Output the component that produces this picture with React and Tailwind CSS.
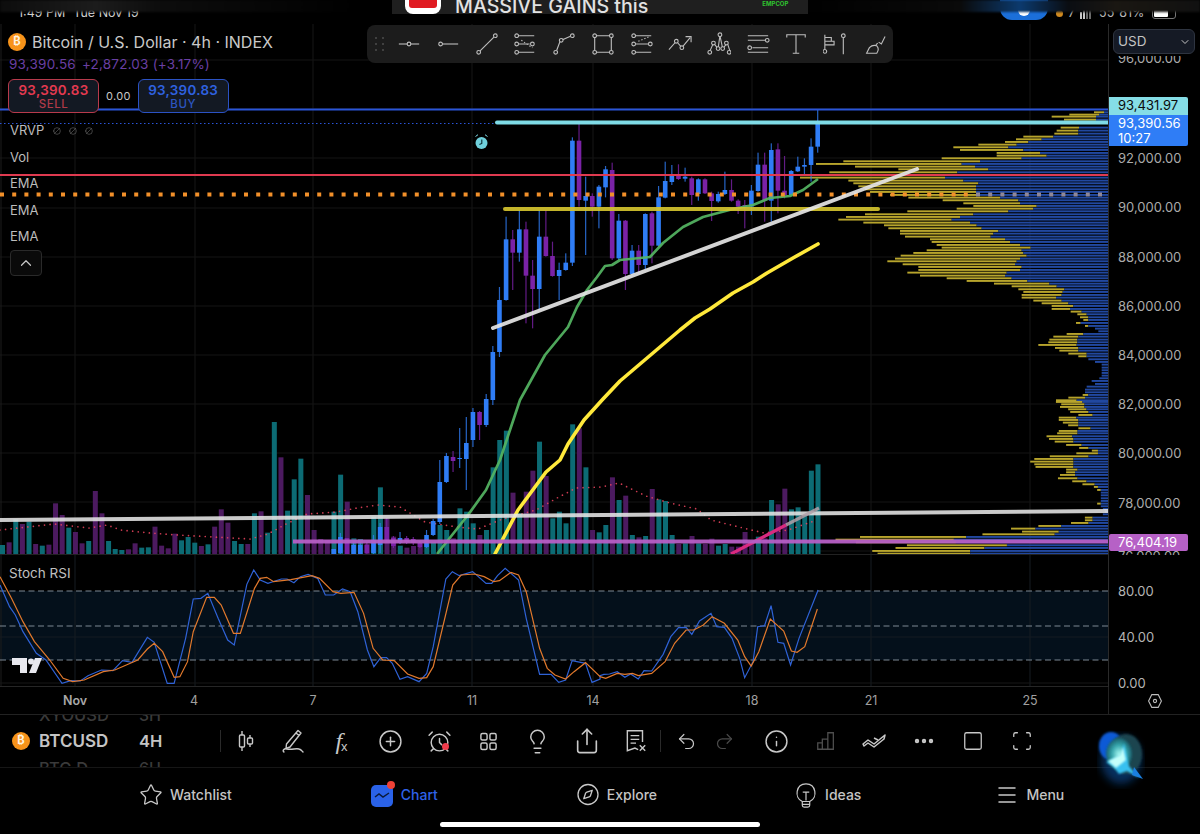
import React from 'react';
import { Star, Compass, Menu, Undo2, Redo2, Info, CirclePlus, Lightbulb, Share, Square, Scan, Ellipsis, ChevronUp, ChevronDown, AlarmClock, Ban } from 'lucide-react';

// candles left of the big move, real pixels: color, top, bottom, wick top, wick bottom
const lowCandles = [
  ['b', 549, 554, 549, 554], ['b', 537, 553, 533, 554], ['p', 538, 554, 538, 554], ['b', 545, 554, 541, 554],
  ['b', 545, 554, 542, 554], ['p', 545, 553, 542, 554], ['b', 540, 553, 535, 554], ['b', 527, 545, 523, 553],
  ['p', 527, 540, 518, 542], ['p', 538, 546, 536, 548], ['b', 538, 543, 532, 544], ['p', 538, 542, 536, 544],
  ['p', 539, 543, 537, 545], ['p', 543, 547, 541, 548], ['b', 535, 547, 530, 548], ['b', 521, 535, 519, 536],
  ['b', 482, 522, 460, 524], ['b', 456, 482, 453, 483], ['p', 457, 461, 451, 472], ['b', 458, 459, 428, 468],
  ['b', 443, 459, 417, 490], ['b', 412, 440, 408, 447], ['p', 412, 425, 411, 440], ['b', 399, 425, 394, 427],
  ['b', 352, 400, 346, 405], ['b', 300, 352, 287, 357],
];

// rest of the candles, measured on a crop: y = 110 + v / 3
const highCandles = [
  ['b', 388, 570, 320, 572], ['p', 388, 428, 360, 540], ['b', 358, 428, 300, 455], ['p', 358, 497, 335, 640],
  ['p', 497, 537, 450, 655], ['b', 380, 537, 300, 600], ['p', 380, 438, 300, 440], ['p', 438, 498, 395, 500],
  ['b', 480, 498, 458, 570], ['b', 458, 480, 430, 482], ['b', 92, 458, 82, 468], ['p', 92, 270, 42, 290],
  ['b', 258, 272, 200, 435], ['p', 258, 290, 250, 320], ['b', 230, 290, 225, 355], ['b', 178, 232, 168, 262],
  ['p', 180, 445, 158, 450], ['b', 332, 445, 312, 450], ['p', 332, 492, 330, 540], ['b', 422, 492, 405, 495],
  ['p', 422, 465, 405, 490], ['b', 312, 465, 310, 478], ['p', 310, 407, 305, 460], ['b', 262, 407, 228, 410],
  ['b', 213, 263, 155, 265], ['b', 198, 216, 165, 225], ['p', 192, 207, 163, 210], ['b', 200, 206, 173, 215],
  ['p', 205, 255, 200, 285], ['b', 208, 252, 205, 272], ['p', 208, 250, 205, 252], ['p', 250, 273, 245, 333],
  ['b', 252, 274, 245, 278], ['b', 240, 252, 185, 255], ['p', 240, 272, 208, 275], ['p', 272, 290, 268, 312],
  ['p', 285, 290, 270, 355], ['b', 242, 290, 225, 315], ['b', 164, 243, 128, 245], ['p', 164, 272, 128, 335],
  ['b', 120, 272, 100, 335], ['p', 118, 242, 100, 310], ['p', 242, 255, 138, 265], ['b', 183, 255, 180, 258],
  ['b', 170, 184, 140, 186], ['b', 165, 170, 145, 195], ['b', 110, 165, 85, 215], ['b', 40, 110, 0, 128],
].map(([c, t, b, wt, wb]) => [c, 110 + t / 3, 110 + b / 3, 110 + wt / 3, 110 + wb / 3]);

const candles = [...lowCandles, ...highCandles];

// volume bars: color letter + top, y = 400 + v / 3
const volume = 't435 p427 t358 p372 t365 p432 t437 p434 p310 p345 t383 p396 p430 t423 p273 p340 t423 t447 t450 p448 p430 t443 t442 p380 p437 p445 p401 t421 t411 t428 p438 t433 p380 p328 p368 t423 t432 p432 t340 p334 t398 t66 p172 t332 t238 t176 p285 p390 p417 p420 t335 t224 p305 t415 t417 p432 t350 t262 p355 p410 t437 p443 p438 p430 t430 t425 t375 t390 p415 t325 t335 t370 p405 t390 t202 t120 t92 p278 t340 p275 p212 t125 p228 t355 t335 t370 t73 p85 t202 p390 t397 t375 p232 t300 p287 t405 p412 t408 p267 t298 t303 t405 p432 t430 p408 t430 p432 p416 t437 t432 p440 p440 p396 p425 t410 p415 t300 p313 p266 t328 t322 t345 t212 t193'
  .split(' ')
  .map((s) => [s[0], +s.slice(1)]);

// volume profile, upper crop: row v, yellow start, blue start (x = 820 + n / 3, y = 100 + v / 3)
const profileTop = [
  [34, 822, 852], [41, 748, 838], [47, 695, 828], [56, 732, 828], [80, 722, 777], [89, 710, 775], [98, 703, 775], [107, 610, 700],
  [115, 588, 665], [123, 555, 625], [131, 475, 590], [139, 400, 565], [147, 420, 610], [156, 530, 660], [164, 530, 680], [172, 365, 605],
  [181, 70, 480], [189, -12, 425], [197, 105, 465], [205, 235, 505], [214, 28, 412], [222, -20, 375], [230, -60, 375], [239, 85, 430],
  [247, 100, 475], [256, 115, 468], [265, 135, 468], [273, 150, 468], [282, 210, 468], [290, 265, 540], [298, 368, 595], [307, 430, 600],
  [315, 460, 650], [323, 410, 640], [331, 262, 565], [340, 135, 460], [348, 78, 420], [356, 55, 395], [365, 130, 450], [373, 192, 470],
  [382, 205, 485], [390, 240, 535], [398, 240, 520], [407, 255, 512], [415, 330, 555], [423, 335, 570], [432, 350, 600], [440, 365, 632],
  [448, 320, 605], [456, 280, 610], [464, 242, 620], [473, 225, 600], [481, 202, 590], [490, 248, 585], [498, 295, 605], [507, 295, 600],
  [515, 262, 560], [524, 300, 555], [532, 380, 575], [540, 440, 622], [548, 522, 688], [556, 575, 710], [565, 595, 733], [573, 610, 728],
  [582, 605, 725], [590, 605, 708], [599, 640, 725], [607, 665, 745], [615, 695, 760], [624, 695, 750], [632, 752, 785], [640, 772, 800],
  [649, 780, 805], [657, 790, 805], [666, 768, 782], [675, 795, 805], [683, 825, 825], [691, 835, 835], [699, 740, 790], [707, 700, 775],
  [716, 688, 772], [724, 685, 772], [732, 655, 770], [741, 705, 775], [749, 718, 775], [758, 745, 800], [766, 775, 800], [775, 805, 805],
  [783, 825, 825], [791, 845, 845], [800, 845, 845], [808, 845, 845], [816, 845, 845], [824, 845, 845], [832, 838, 838], [840, 815, 815],
  [849, 825, 825], [857, 800, 800], [866, 795, 795], [874, 795, 795], [882, 788, 805], [890, 745, 795], [898, 708, 770],
].map(([v, a, b]) => [100 + v / 3, 820 + a / 3, 820 + b / 3]);

// lower crop: x = 560 + n / 2.45, y = 400 + v / 3
const profileLow = [
  [3, 1215, 1280], [10, 1228, 1285], [18, 1225, 1285], [25, 1245, 1290], [33, 1250, 1295], [42, 1270, 1305], [50, 1222, 1265], [57, 1222, 1270],
  [65, 1232, 1270], [73, 1245, 1270], [82, 1270, 1300], [90, 1222, 1268], [97, 1218, 1268], [106, 1192, 1255], [114, 1198, 1258], [122, 1212, 1258],
  [132, 1240, 1278], [141, 1272, 1295], [149, 1303, 1318], [157, 1265, 1318], [166, 1200, 1295], [174, 1162, 1258], [182, 1152, 1258], [190, 1162, 1258],
  [198, 1165, 1258], [206, 1240, 1268], [214, 1240, 1262], [222, 1225, 1262], [232, 1220, 1268], [241, 1255, 1290], [250, 1280, 1310], [258, 1308, 1318],
  [267, 1316, 1325], [275, 1325, 1325], [283, 1325, 1325], [292, 1325, 1325], [300, 1325, 1325], [308, 1316, 1325], [316, 1325, 1325], [324, 1330, 1330],
  [332, 1335, 1335], [340, 1330, 1330], [350, 1286, 1305], [358, 1286, 1305], [366, 1252, 1295], [375, 1172, 1228], [383, 1105, 1165], [392, 1132, 1222],
  [400, 1035, 1212], [408, 735, 995], [416, 675, 965], [424, 725, 970], [433, 850, 1095], [441, 822, 1040], [450, 765, 1005], [458, 778, 1005],
].map(([v, a, b]) => [400 + v / 3, 560 + a / 2.45, 560 + b / 2.45]);

const profile = [...profileTop, ...profileLow];

const pts = (list) => list.map(([x, y]) => `${x},${y}`).join(' ');

const greenEma = [[437, 554], [468, 515], [486, 490], [500, 460], [520, 400], [545, 355], [568, 327], [577, 307], [587, 290], [597, 277], [605, 266], [612, 265], [620, 260], [650, 257], [663, 243], [683, 227], [703, 217], [733, 209], [753, 205], [770, 198], [790, 196], [803, 190], [818, 179]];
const yellowEma = [[495, 554], [518, 510], [546, 472], [560, 460], [568, 444], [584, 420], [603, 399], [620, 381], [640, 364], [660, 347], [680, 330], [695, 318], [710, 309], [733, 293], [753, 282], [767, 273], [793, 258], [818, 244]];
const volumeMa = [[0, 530], [18, 528], [54, 524], [89, 528], [107, 525], [121, 530], [150, 533], [178, 535], [214, 537], [250, 539], [268, 534], [286, 524], [307, 514], [336, 512], [357, 508], [378, 505], [400, 507], [425, 522], [457, 527], [478, 529], [500, 520], [536, 510], [557, 498], [576, 488], [601, 487], [619, 483], [646, 496], [670, 503], [697, 509], [711, 520], [735, 526], [764, 533], [788, 530], [817, 520]];

const toStoch = (list, offset) => list.map(([x, y]) => [offset + x / 2.613, 555 + y / 3]);
const stochBlue = [
  ...toStoch([[0, 90], [25, 155], [40, 180], [60, 230], [95, 295], [120, 315], [162, 385], [185, 377], [210, 378], [230, 362], [265, 345], [295, 347], [320, 317], [345, 322], [385, 247], [403, 262], [437, 385], [455, 385], [485, 250], [505, 132], [525, 130], [543, 115], [570, 190], [595, 255], [612, 270], [645, 88], [663, 45], [680, 75], [700, 85], [735, 72], [750, 72], [768, 83], [785, 65], [805, 58], [830, 70], [850, 120], [872, 120], [895, 102], [915, 110], [935, 170], [960, 285], [977, 335], [995, 308], [1010, 308], [1025, 325], [1045, 373], [1065, 365], [1095, 380], [1115, 355], [1132, 275], [1165, 72], [1182, 50], [1200, 62], [1235, 50], [1270, 85], [1285, 85], [1300, 62], [1320, 40], [1355, 75], [1375, 190], [1410, 358], [1440, 358], [1460, 382], [1478, 375], [1495, 317], [1530, 325], [1547, 382], [1568, 372]], 0),
  ...toStoch([[0, 362], [10, 358], [25, 357], [45, 350], [65, 367], [80, 357], [100, 372], [115, 347], [135, 348], [165, 298], [185, 245], [205, 218], [225, 217], [240, 238], [260, 198], [290, 175], [305, 215], [325, 217], [345, 250], [365, 310], [378, 368], [400, 320], [412, 215], [430, 212], [447, 152], [465, 262], [480, 265], [498, 330], [520, 250], [570, 105]], 600),
];
const stochOrange = [
  ...toStoch([[0, 65], [30, 130], [60, 200], [90, 260], [130, 315], [165, 370], [190, 380], [220, 375], [270, 350], [300, 345], [330, 330], [360, 315], [385, 282], [403, 265], [425, 290], [455, 367], [470, 365], [490, 320], [505, 230], [540, 127], [560, 127], [578, 150], [610, 235], [628, 235], [665, 100], [680, 70], [697, 67], [715, 80], [760, 74], [815, 62], [835, 70], [870, 110], [890, 115], [925, 112], [950, 175], [975, 280], [1000, 315], [1030, 317], [1065, 357], [1095, 370], [1115, 368], [1132, 335], [1183, 90], [1205, 60], [1240, 57], [1265, 65], [1290, 80], [1305, 77], [1335, 52], [1355, 60], [1375, 110], [1410, 280], [1430, 340], [1450, 360], [1478, 372], [1500, 350], [1530, 323], [1568, 365]], 0),
  ...toStoch([[0, 365], [15, 370], [45, 355], [65, 358], [85, 355], [100, 362], [135, 355], [170, 320], [195, 265], [225, 225], [245, 225], [270, 210], [293, 185], [325, 205], [360, 255], [378, 305], [395, 333], [415, 290], [445, 192], [480, 228], [500, 288], [515, 292], [535, 275], [568, 162]], 600),
];

const gridX = [75, 195, 313, 472, 593, 752, 871, 1030];
const gridY = [60, 109, 158, 208, 257, 306, 355, 404, 453, 502, 551];
const axisPrices = [[157, '92,000.00'], [206, '90,000.00'], [256, '88,000.00'], [305, '86,000.00'], [354, '84,000.00'], [403, '82,000.00'], [452, '80,000.00'], [502, '78,000.00']];
const timeTicks = [[75, 'Nov', true], [194, '4'], [313, '7'], [472, '11'], [593, '14'], [752, '18'], [871, '21'], [1030, '25']];

function MainChart() {
  const orangeDots = [];
  for (let x = 2; x < 1108; x += 12.2) orangeDots.push(x);
  return (
    <svg viewBox="0 24 1108 531" className="block w-[1108px] h-[531px]">
      {gridX.map((x) => <line key={x} x1={x} x2={x} y1="24" y2="555" stroke="#161616" />)}
      {gridY.map((y) => <line key={y} x1="0" x2="1108" y1={y} y2={y} stroke="#141414" />)}
      <line x1="1" x2="1" y1="24" y2="555" stroke="#1c1c1c" />

      {volume.map(([c, v], i) => {
        const top = 400 + v / 3;
        return <rect key={i} x={6.63 * i} y={top} width="5" height={554 - top} fill={c === 't' ? '#0c6b74' : '#4c1a60'} />;
      })}
      <polyline points={pts(volumeMa)} fill="none" stroke="#f0455f" strokeWidth="1.7" strokeDasharray="0 5.6" strokeLinecap="round" opacity="0.85" />

      {profile.map(([y, a, b], i) => (
        <g key={i}>
          {a < b && <rect x={a} y={y} width={b - a} height="1.9" fill="#b7a42c" />}
          <rect x={b} y={y} width={1108 - b} height="1.9" fill="#2148a0" />
        </g>
      ))}

      {candles.map(([c, t, b, wt, wb], i) => {
        const x = 817.7 - 6.63 * (candles.length - 1 - i);
        const fill = c === 'b' ? '#2f7df6' : '#7a22a6';
        return (
          <g key={i}>
            <rect x={x - 0.6} y={wt} width="1.2" height={wb - wt} fill={fill} opacity="0.8" />
            <rect x={x - 2.3} y={t} width="4.6" height={Math.max(b - t, 1)} fill={fill} />
          </g>
        );
      })}

      <polyline points={pts(greenEma)} fill="none" stroke="#55b563" strokeWidth="2.7" strokeLinejoin="round" opacity="0.92" />
      <polyline points={pts(yellowEma)} fill="none" stroke="#ffe93b" strokeWidth="3.6" strokeLinejoin="round" strokeLinecap="round" />

      <line x1="0" x2="1108" y1="109.5" y2="109.5" stroke="#2a55d8" strokeWidth="2" />
      <line x1="0" x2="497" y1="123.5" y2="123.5" stroke="#2a55d8" strokeWidth="1" strokeDasharray="1.5 2.5" />
      <line x1="497" x2="1108" y1="122.5" y2="122.5" stroke="#7fdbe6" strokeWidth="4" strokeLinecap="round" />
      <line x1="0" x2="1108" y1="175" y2="175" stroke="#df3a50" strokeWidth="2" />
      {orangeDots.map((x) => <rect key={x} x={x - 2} y="192.5" width="4" height="4" fill={x > 975 ? '#8f8798' : '#f2902a'} />)}
      <line x1="505" x2="878" y1="209" y2="209" stroke="#d4c42e" strokeWidth="4" strokeLinecap="round" opacity="0.92" />
      <line x1="493" x2="917" y1="328" y2="169" stroke="#e6e6e6" strokeWidth="4" strokeLinecap="round" opacity="0.92" />
      <line x1="0" x2="1108" y1="520" y2="511" stroke="#e6e6e6" strokeWidth="4" opacity="0.88" />
      <line x1="731" x2="786" y1="554" y2="525" stroke="#d92a80" strokeWidth="3.2" />
      <line x1="786" x2="819" y1="525" y2="508" stroke="#b3a0a8" strokeWidth="3.2" opacity="0.85" />
      <line x1="293" x2="1108" y1="541.5" y2="541.5" stroke="#b75fc6" strokeWidth="4" opacity="0.95" />

      <g stroke="#7fd8e3" strokeWidth="1" fill="none">
        <path d="M475.5 136.5l2.5-1.8M487.5 136.5l-2.5-1.8" />
      </g>
      <circle cx="481.5" cy="143" r="6" fill="#6fd0dc" />
      <path d="M481.8 139.5v4l-2.4 1" stroke="#0a2a30" strokeWidth="1.1" fill="none" />
      <line x1="0" x2="1108" y1="554.5" y2="554.5" stroke="#222" />
    </svg>
  );
}

function StochChart() {
  return (
    <svg viewBox="0 555 1108 132" className="block w-[1108px] h-[132px]">
      <rect x="0" y="591" width="1108" height="69" fill="#04101b" />
      {gridX.map((x) => <line key={x} x1={x} x2={x} y1="555" y2="687" stroke="#161c22" />)}
      <line x1="1" x2="1" y1="555" y2="687" stroke="#1c1c1c" />
      <line x1="0" x2="1108" y1="637" y2="637" stroke="#141b22" />
      <line x1="0" x2="1108" y1="683" y2="683" stroke="#161616" />
      {[591, 626, 660].map((y) => <line key={y} x1="0" x2="1108" y1={y} y2={y} stroke="#7c8894" strokeDasharray="6 3.5" />)}
      <polyline points={pts(stochBlue)} fill="none" stroke="#2f62d6" strokeWidth="1.2" />
      <polyline points={pts(stochOrange)} fill="none" stroke="#e2792c" strokeWidth="1.2" />
      <g fill="#e8e8ee">
        <path d="M12 658h15v15h-7v-8h-8z" />
        <circle cx="31" cy="661.5" r="3" />
        <path d="M35 658h7l-6 15h-7z" />
      </g>
      <line x1="0" x2="1108" y1="686.5" y2="686.5" stroke="#262626" />
    </svg>
  );
}

function Node({ x, y }) {
  return <circle cx={x} cy={y} r="2" fill="#1c1c1c" />;
}

// drawing toolbar glyphs, 26 x 26
const toolIcons = [
  <><path d="M2 13h22" /><Node x={13} y={13} /></>,
  <><path d="M7 13h17" /><Node x={5} y={13} /></>,
  <><path d="M5.5 20.5 20.5 5.5" /><Node x={4} y={22} /><Node x={22} y={4} /></>,
  <><path d="M6 4h17M6 13h12M6 22h17" /><path d="M9 9l12 8" strokeDasharray="1.5 2" /><Node x={4} y={4} /><Node x={4} y={13} /><Node x={21} y={13} /><Node x={4} y={22} /></>,
  <><path d="M5 20 9 9.5 20 4.5" /><Node x={4} y={22} /><Node x={10} y={9} /><Node x={22} y={4} /></>,
  <><path d="M6 4h14M6 22h14M4 6v14M22 6v14" /><Node x={4} y={4} /><Node x={22} y={4} /><Node x={4} y={22} /><Node x={22} y={22} /></>,
  <><path d="M6 4h17M6 13h15M6 22h17" /><path d="M9 10l12-5" strokeDasharray="1.5 2" /><Node x={4} y={4} /><Node x={4} y={13} /><Node x={22} y={13} /><Node x={4} y={22} /></>,
  <><path d="M1 19 9 10l6 7 9-11" /><path d="M19 5h6v6" /><Node x={9} y={10} /><Node x={15} y={17} /></>,
  <><path d="M3 21 7 12l5 6 2-14 3 14 5-6 3 9" /><Node x={3} y={22} /><Node x={7} y={12} /><Node x={14} y={3} /><Node x={12} y={18} /><Node x={17} y={18} /><Node x={21} y={12} /><Node x={24} y={22} /></>,
  <><path d="M2 4h22M2 22h22M2 9h19M7 17h17" /><Node x={23} y={9} /><Node x={4} y={17} /></>,
  <path d="M3 6V3h20v3M13 3v20M9.5 23h7" />,
  <><path d="M2 19V3M2 6h7v4H2M2 10h10v4H2" /><Node x={2} y={21} /><path d="M22 6v18" /><Node x={22} y={4} /></>,
  <><path d="M5 23h11c2-3 2-6 0-8-3-1-6 0-8 2zM15 14l2-2" /><path d="M18 11l3 2 4-8" /></>,
];

function DrawingToolbar() {
  return (
    <div className="absolute left-[367px] top-[1px] flex h-[38px] w-[526px] items-center rounded-lg bg-[#1c1c1c]">
      <div className="ml-[8px] grid w-[12px] grid-cols-2 gap-x-[4px] gap-y-[4px]">
        {[0, 1, 2, 3, 4, 5].map((i) => <span key={i} className="h-[2px] w-[2px] rounded-full bg-[#4d4d4d]" />)}
      </div>
      <div className="ml-[5px] flex items-center">
        {toolIcons.map((icon, i) => (
          <div key={i} className="flex h-[38px] w-[38.7px] items-center justify-center">
            <svg viewBox="0 0 26 26" className="h-[24px] w-[24px]" fill="none" stroke="#bdbdbd" strokeWidth="1.2">{icon}</svg>
          </div>
        ))}
      </div>
    </div>
  );
}

function Coin({ size }) {
  return (
    <span style={{ width: size, height: size, fontSize: size * 0.62 }} className="flex shrink-0 items-center justify-center rounded-full bg-[#f7931a] font-bold leading-none text-[#fff3e0]">₿</span>
  );
}

function TradeBox({ label, border, text, sub }) {
  return (
    <div className={`flex h-[34px] w-[91px] flex-col items-center justify-center rounded-md border bg-[#131923] ${border}`}>
      <span className={`text-[13.4px] font-semibold leading-[16px] tracking-[0.3px] ${text}`}>93,390.83</span>
      <span className={`text-[11.5px] font-medium leading-[13px] tracking-[0.5px] ${sub}`}>{label}</span>
    </div>
  );
}

function Legend() {
  return (
    <div className="absolute left-[8px] top-[7px] flex flex-col items-start">
      <div className="flex h-[22px] items-center gap-[6px]">
        <Coin size={18} />
        <span className="text-[16px] leading-none text-[#c9c9c9]">Bitcoin / U.S. Dollar · 4h · INDEX</span>
      </div>
      <div className="flex h-[22px] items-center gap-[6px] pl-[1px] text-[13.5px] tracking-[0.2px] text-[#6a3fa3]">
        <span>93,390.56</span>
        <span>+2,872.03 (+3.17%)</span>
      </div>
      <div className="mt-[4px] flex items-center gap-[7px]">
        <TradeBox label="SELL" border="border-[#b83a4c]" text="text-[#e53a50]" sub="text-[#b03a48]" />
        <span className="text-[11px] tracking-[0.3px] text-[#c8c8c8]">0.00</span>
        <TradeBox label="BUY" border="border-[#2b52c4]" text="text-[#2f62e0]" sub="text-[#2c55c0]" />
      </div>
      <div className="mt-[8px] flex h-[20px] items-center gap-[9px] pl-[2px] text-[13px] text-[#bcbcbc]">
        <span>VRVP</span>
        <span className="flex gap-[8px] text-[#7d7d7d]">
          <Ban size={8} strokeWidth={1.5} className="-scale-x-100" /><Ban size={8} strokeWidth={1.5} className="-scale-x-100" /><Ban size={8} strokeWidth={1.5} className="-scale-x-100" />
        </span>
      </div>
      <div className="flex flex-col pl-[2px] text-[13px] leading-[26.3px] text-[#bcbcbc]">
        <span className="mt-[3px]">Vol</span>
        <span>EMA</span>
        <span>EMA</span>
        <span>EMA</span>
      </div>
      <div className="ml-[2px] mt-[1px] flex h-[26px] w-[32px] items-center justify-center rounded-[4px] border border-[#2a2a2a] bg-[#0a0a0a]">
        <ChevronUp size={18} strokeWidth={1.6} className="text-[#c8c8c8]" />
      </div>
    </div>
  );
}

function AxisLabel({ y, children, className = 'text-[#ababab]' }) {
  return <div style={{ top: y + 0.5 }} className={`absolute left-[9px] -translate-y-1/2 text-[13px] leading-none ${className}`}>{children}</div>;
}

function PriceAxis() {
  return (
    <div className="relative h-[531px] w-[92px] overflow-hidden border-l border-[#2a2a2a]">
      <AxisLabel y={33}>96,000.00</AxisLabel>
      {axisPrices.map(([y, label]) => <AxisLabel key={y} y={y - 24}>{label}</AxisLabel>)}
      <AxisLabel y={531}>76,000.00</AxisLabel>
      <div className="absolute left-0 top-0 h-[31.5px] w-full bg-black">
        <div className="absolute left-[4px] top-[5px] flex h-[25px] w-[82px] items-center justify-between rounded-md border border-[#2e3440] bg-[#151a25] pl-[4px] pr-[3px] text-[13.5px] text-[#c4c4c4]">
          USD
          <ChevronDown size={12} strokeWidth={2} />
        </div>
      </div>
      <div className="absolute left-0 top-[73px] flex h-[18px] w-[79px] items-center rounded-tr-[2px] bg-[#85dde6] pl-[9px] text-[13px] text-[#0b0b0b]">93,431.97</div>
      <div className="absolute left-0 top-[91px] flex h-[31px] w-[79px] flex-col justify-center rounded-br-[2px] bg-[#2f7df6] pl-[9px] text-[13px] leading-[15px] text-white">
        <span>93,390.56</span>
        <span>10:27</span>
      </div>
      <div className="absolute left-0 top-[510px] flex h-[17px] w-[79px] items-center rounded-[2px] bg-[#b661c6] pl-[9px] text-[13px] text-white">76,404.19</div>
    </div>
  );
}

function StatusBar() {
  return (
    <div className="relative h-[24px] overflow-hidden">
      <div className="absolute left-[18px] top-[7px] flex gap-[8px] text-[12.5px] leading-none text-[#d0d0d0]">
        <span>1:49 PM</span>
        <span>Tue Nov 19</span>
      </div>
      <div className="absolute left-[1000px] top-[-13px] flex h-[33px] w-[48px] items-end justify-center rounded-[12px] bg-[#1b6fd9] pb-[4px]">
        <span className="h-[12px] w-[12px] rounded-full bg-white" />
      </div>
      <div className="absolute left-[1056px] top-[7px] flex items-center gap-[5px] text-[12.5px] leading-none text-[#b8b8b8]">
        <span className="h-[7px] w-[7px] rounded-full bg-[#d08a20]" />
        <span>7</span>
        <span className="flex items-end gap-[1px]">
          <span className="h-[7px] w-[2px] bg-[#c8c8c8]" /><span className="h-[9px] w-[2px] bg-[#c8c8c8]" /><span className="h-[11px] w-[2px] bg-[#6a6a6a]" /><span className="h-[12px] w-[2px] bg-[#6a6a6a]" />
        </span>
        <span className="ml-[3px]">55</span>
        <span>81%</span>
        <span className="ml-[3px] flex h-[11px] w-[24px] items-start rounded-[3px] border border-[#777] p-[1px]"><span className="h-full w-[14px] rounded-[1px] bg-white" /></span>
      </div>
      <div className="absolute inset-x-0 top-0 h-[12px] bg-[linear-gradient(90deg,#0d0d0d_0%,#1c1c1c_8%,#0d0d0d_13%,#000_30%,#000_66%,#0a0a0a_80%,#0c3a6e_85%,#0a0d12_89%,#1a1712_93%,#111_100%)] blur-[1px]" />
      <div className="absolute left-[392px] top-0 flex h-[14px] w-[416px] items-end overflow-hidden bg-[#1f1f1f]">
        <div className="relative ml-[13px] h-[14px] w-[36px] overflow-hidden rounded-b-[8px] bg-white">
          <div className="absolute left-[4px] top-[-8px] h-[16px] w-[28px] rounded-[3px] bg-[#e01b22]" />
        </div>
        <span className="ml-[14px] translate-y-[3px] text-[19.6px] font-medium leading-none text-[#e2e2e2]">MASSIVE GAINS this</span>
        <span className="ml-[114px] self-start text-[6px] font-bold leading-[7px] text-[#2fc42f]">EMPCOP</span>
      </div>
    </div>
  );
}

function Sep() {
  return <span className="h-[22px] w-px shrink-0 bg-[#2a2a2a]" />;
}

function Tool({ children }) {
  return <div className="relative flex h-[52px] w-[49px] shrink-0 items-center justify-center text-[#c8c8c8]">{children}</div>;
}

function BottomToolbar() {
  return (
    <div className="flex h-[53px] items-center border-b border-[#161616]">
      <div className="relative flex h-[52px] w-[220px] shrink-0 items-center overflow-hidden pl-[12px]">
        <Coin size={18} />
        <span className="absolute left-[39px] top-[-12px] text-[16.5px] font-medium text-[#3a3a3a]">XYOUSD</span>
        <span className="absolute left-[139px] top-[-12px] text-[16px] font-medium text-[#3a3a3a]">3H</span>
        <span className="absolute left-[39px] top-[41px] text-[16.5px] font-medium text-[#3a3a3a]">BTC.D</span>
        <span className="absolute left-[139px] top-[41px] text-[16px] font-medium text-[#3a3a3a]">6H</span>
        <span className="absolute left-[39px] top-[16px] text-[17px] font-semibold leading-[20px] text-[#c4c4c4]">BTCUSD</span>
        <span className="absolute left-[139px] top-[16px] text-[16.5px] font-semibold leading-[20px] text-[#c4c4c4]">4H</span>
      </div>
      <Sep />
      <Tool>
        <svg viewBox="0 0 24 24" className="h-[24px] w-[24px]" fill="none" stroke="#c8c8c8" strokeWidth="1.4">
          <path d="M8 2v4M8 18v4M16 6v3M16 15v3" /><rect x="5.5" y="6" width="5" height="12" rx="1" /><rect x="13.5" y="9" width="5" height="6" rx="1" />
        </svg>
      </Tool>
      <div className="-ml-[2px]"><Sep /></div>
      <Tool>
        <svg viewBox="0 0 26 26" className="h-[26px] w-[26px]" fill="none" stroke="#c8c8c8" strokeWidth="1.4" strokeLinecap="round" strokeLinejoin="round">
          <path d="M18 2.5l3 2.5L10 19l-4 1.5.5-4.5zM16 5l3 2.5" /><path d="M4 24c-2-1 0-4 3-3 5 1 9-1 12 0 2 .5 3 2 4 3" />
        </svg>
      </Tool>
      <Tool>
        <span className="flex items-end font-['Liberation_Serif',serif] text-[24px] italic leading-none">f<span className="-ml-[1px] font-['Liberation_Sans',sans-serif] text-[13px] not-italic">x</span></span>
      </Tool>
      <Tool><CirclePlus size={25} strokeWidth={1.4} /></Tool>
      <Tool>
        <AlarmClock size={25} strokeWidth={1.4} />
        <span className="absolute left-[27px] top-[28px] h-[7px] w-[7px] rounded-full bg-[#ef3b4b]" />
      </Tool>
      <Tool>
        <svg viewBox="0 0 20 20" className="h-[19px] w-[19px]" fill="none" stroke="#c8c8c8" strokeWidth="1.5">
          <rect x="2" y="1.5" width="6.5" height="7" rx="1.6" /><rect x="11.5" y="1.5" width="6.5" height="7" rx="1.6" /><rect x="2" y="11.5" width="6.5" height="7" rx="1.6" /><rect x="11.5" y="11.5" width="6.5" height="7" rx="1.6" />
        </svg>
      </Tool>
      <Tool><Lightbulb size={27} strokeWidth={1.3} /></Tool>
      <Tool><Share size={28} strokeWidth={1.4} /></Tool>
      <Tool>
        <svg viewBox="0 0 24 24" className="h-[26px] w-[26px]" fill="none" stroke="#c8c8c8" strokeWidth="1.3">
          <path d="M14 20l-3-1.5L4 21V2.5h14V13M7 7h8M7 10.5h8M7 14h5" /><path d="M15.5 16l5 5M20.5 16l-5 5" />
        </svg>
      </Tool>
      <Sep />
      <div className="ml-[6px] flex">
        <div className="flex h-[52px] w-[38px] items-center justify-center text-[#c8c8c8]"><Undo2 size={21} strokeWidth={1.4} /></div>
        <div className="flex h-[52px] w-[38px] items-center justify-center text-[#4a4a4a]"><Redo2 size={21} strokeWidth={1.4} /></div>
      </div>
      <div className="ml-[9px]"><Sep /></div>
      <Tool><Info size={25} strokeWidth={1.4} /></Tool>
      <Tool>
        <svg viewBox="0 0 24 24" className="h-[22px] w-[22px]" fill="none" stroke="#4e4e4e" strokeWidth="1.4">
          <path d="M3 21v-7h5v7zM8 21V10h6v11zM14 21V3h6v18z" />
        </svg>
      </Tool>
      <Tool>
        <svg viewBox="0 0 28 24" className="h-[24px] w-[28px]" fill="none" stroke="#c8c8c8" strokeWidth="1.5" strokeLinejoin="round">
          <path d="M2 15l5-4 6 4 11-9-1 4-10 8-6-4-4 3z" /><path d="M13 9l4 2" />
        </svg>
      </Tool>
      <Tool><Ellipsis size={24} strokeWidth={2.4} /></Tool>
      <Tool><Square size={22} strokeWidth={1.4} /></Tool>
      <Tool><Scan size={22} strokeWidth={1.4} /></Tool>
    </div>
  );
}

function SiriOrb() {
  return (
    <svg viewBox="0 0 54 64" className="absolute left-[1094px] top-[728px] h-[64px] w-[54px]">
      <defs>
        <radialGradient id="orbA" cx="50%" cy="50%" r="50%">
          <stop offset="0%" stopColor="#a8fbf4" />
          <stop offset="55%" stopColor="#35a6ad" />
          <stop offset="100%" stopColor="#1a5f6c" />
        </radialGradient>
        <filter id="soft"><feGaussianBlur stdDeviation="1" /></filter>
        <filter id="glow"><feGaussianBlur stdDeviation="4" /></filter>
      </defs>
      <ellipse cx="27" cy="32" rx="20" ry="24" fill="#0f5db8" opacity="0.5" filter="url(#glow)" />
      <ellipse cx="17" cy="18" rx="12" ry="14" fill="#0e5ad6" filter="url(#soft)" />
      <ellipse cx="32" cy="26" rx="16" ry="20" fill="#1d4450" filter="url(#soft)" />
      <ellipse cx="25" cy="26" rx="13" ry="16" fill="url(#orbA)" filter="url(#soft)" />
      <path d="M12 34l15-6 3-13 5 23 10 12-12-7-8 3-6-8z" fill="#38c0f0" filter="url(#soft)" />
      <path d="M14 33l12-6 3-8 3 13-10 8z" fill="#c4fffa" filter="url(#soft)" />
      <path d="M40 39l9 12-11-4z" fill="#1a7fe0" />
    </svg>
  );
}

function TabItem({ icon, label, active, className = '' }) {
  return (
    <div className={`flex items-center gap-[7px] ${className}`}>
      <span className="relative flex h-[26px] w-[24px] items-center justify-center">{icon}</span>
      <span className={`text-[14px] font-medium ${active ? 'text-[#2f62e8]' : 'text-[#c4c4c4]'}`}>{label}</span>
    </div>
  );
}

function TabBar() {
  return (
    <div className="relative flex-1">
      <div className="flex h-[53px] items-center gap-[138px] pl-[139px]">
        <TabItem label="Watchlist" icon={<Star size={26} strokeWidth={1.3} className="text-[#c8c8c8]" />} />
        <TabItem
          label="Chart"
          active
          icon={
            <>
              <svg viewBox="0 0 24 26" className="h-[26px] w-[24px]">
                <rect x="1" y="3" width="22" height="22" rx="5" fill="#2a62e8" />
                <path d="M5 15l4-3 4 3 6-4" fill="none" stroke="#0a1a3a" strokeWidth="1.5" />
              </svg>
              <span className="absolute right-[-1px] top-[-1px] h-[8px] w-[8px] rounded-full bg-[#ef4136]" />
            </>
          }
        />
        <TabItem label="Explore" icon={<Compass size={25} strokeWidth={1.3} className="text-[#c8c8c8]" />} />
        <TabItem
          label="Ideas"
          className="-ml-[1px]"
          icon={
            <svg viewBox="0 0 24 28" className="h-[26px] w-[24px]" fill="none" stroke="#c8c8c8" strokeWidth="1.3">
              <path d="M8 21c-9-4-7-19 4-19s13 15 4 19z" /><path d="M8.5 11h7M12 11v9" /><path d="M8 21v4a2 2 0 0 0 2 2h4a2 2 0 0 0 2-2v-4M8 24h8" />
            </svg>
          }
        />
        <TabItem label="Menu" className="-ml-[4px]" icon={<Menu size={26} strokeWidth={1.5} className="text-[#c8c8c8]" />} />
      </div>
      <div className="absolute bottom-[7px] left-[440px] h-[5px] w-[320px] rounded-full bg-white" />
    </div>
  );
}

export default function App() {
  return (
    <div className="relative flex h-[834px] w-[1200px] flex-col overflow-hidden bg-black font-['Inter',sans-serif] text-[#c8c8c8]">
      <StatusBar />

      <div className="relative flex">
        <MainChart />
        <PriceAxis />
        <Legend />
        <DrawingToolbar />
      </div>

      <div className="relative flex">
        <StochChart />
        <div className="relative h-[132px] w-[92px] border-l border-[#2a2a2a]">
          <AxisLabel y={35} className="text-[#b4b4b4]">80.00</AxisLabel>
          <AxisLabel y={81} className="text-[#b4b4b4]">40.00</AxisLabel>
          <AxisLabel y={127} className="text-[#b4b4b4]">0.00</AxisLabel>
        </div>
        <span className="absolute left-[9px] top-[8px] text-[13.5px] text-[#c0c0c0]">Stoch RSI</span>
      </div>

      <div className="relative flex h-[28px] border-b border-[#222]">
        {timeTicks.map(([x, label, bold]) => (
          <span key={label} style={{ left: x }} className={`absolute top-[8px] -translate-x-1/2 text-[12.5px] leading-none ${bold ? 'font-semibold text-[#a8a8a8]' : 'text-[#a0a0a0]'}`}>{label}</span>
        ))}
        <div className="ml-auto flex h-full w-[92px] items-center justify-center border-l border-[#222]">
          <svg viewBox="0 0 20 20" className="h-[16px] w-[16px]" fill="none" stroke="#bdbdbd" strokeWidth="1.4">
            <path d="M6 2h8l4 8-4 8H6l-4-8z" /><circle cx="10" cy="10" r="2" />
          </svg>
        </div>
      </div>

      <BottomToolbar />
      <TabBar />
      <SiriOrb />
    </div>
  );
}
